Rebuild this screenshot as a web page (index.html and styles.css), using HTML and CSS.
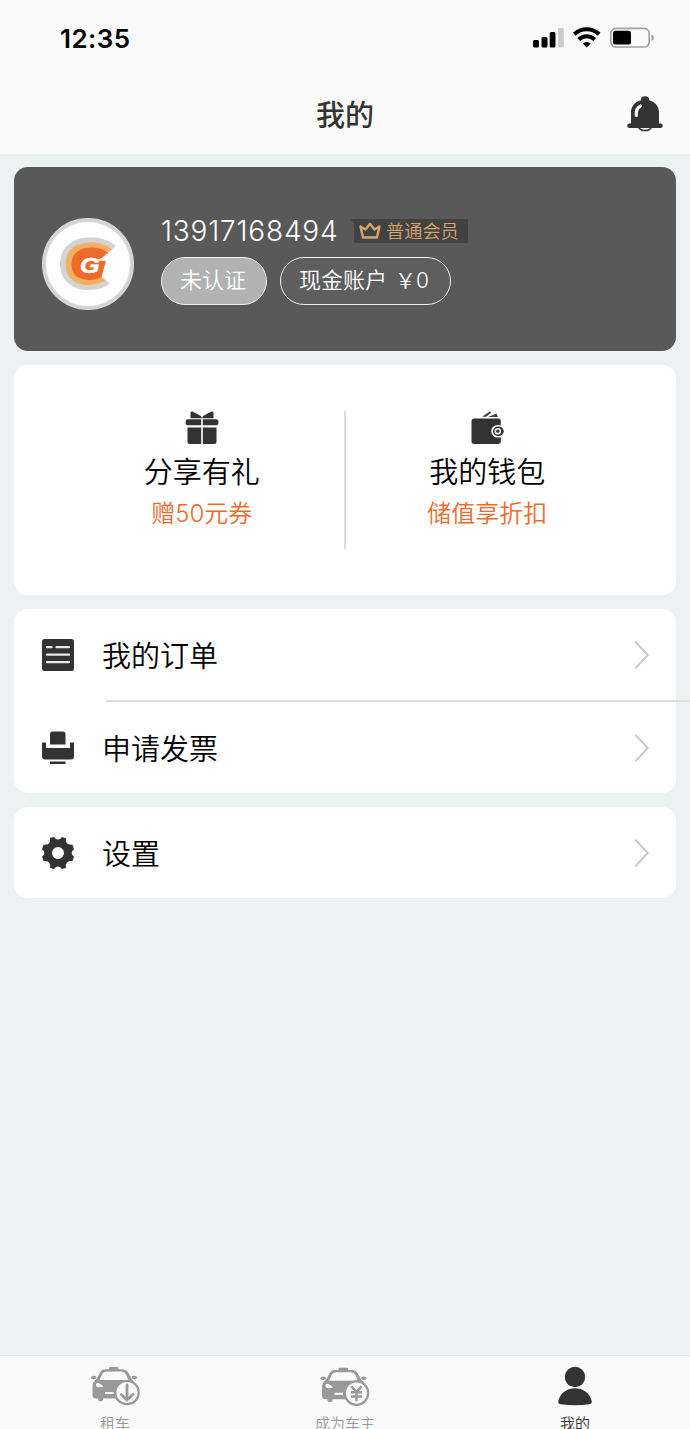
FILE: index.html
```html
<!DOCTYPE html>
<html lang="zh-CN">
<head>
<meta charset="utf-8">
<title>我的</title>
<link rel="stylesheet" href="styles.css">
</head>
<body>
<div class="screen">
  <header class="header">
    <div class="status">
      <span class="clock">12:35</span>
      <svg class="status-icons" width="124" height="24" viewBox="0 0 124 24">
        <rect x="3" y="14" width="6" height="7.500" rx="1.500"/>
        <rect x="11.500" y="11" width="6" height="10.500" rx="1.500"/>
        <rect x="19.700" y="6" width="5.800" height="15.500" rx="1.500"/>
        <rect x="28" y="2" width="5.800" height="19.500" rx="1.500" fill="#ccc"/>
        <g fill="none" stroke="#000" stroke-width="4">
          <path d="M44.300 8.200a18 18 0 0 1 24.800 0"/>
          <path d="M48.700 13.500a11.500 11.500 0 0 1 16 0"/>
        </g>
        <path d="M56.700 21.500l-4-4a6 6 0 0 1 8 0z"/>
        <rect x="80.800" y="2.300" width="38.400" height="18.700" rx="5" fill="none" stroke="#a0a0a0" stroke-width="1.700"/>
        <rect x="83" y="4.800" width="18" height="13.700" rx="2.600"/>
        <path d="M121.500 8.500q2.300 1 2.300 3.300t-2.300 3.300z" fill="#999"/>
      </svg>
    </div>
    <div class="titlebar">
      <h1 class="title">我的</h1>
      <svg class="bell" width="36" height="36" viewBox="0 0 36 36">
        <path d="M11.600 31c1.400 4.800 11.400 4.800 12.800 0" fill="#fff" stroke="#333" stroke-width="1.500"/>
        <path d="M14 3Q14 .3 18 .3T22 3v1.200C28.500 5.800 32 10.500 32 16.500V27.500H33.500a2.200 2.200 0 0 1 0 4.500H2.500a2.200 2.200 0 0 1 0-4.500H4V16.500C4 10.500 7.500 5.800 14 4.200z" fill="#333"/>
        <path d="M9.300 19.500c-.4-5.500.8-8 4.200-9.500" fill="none" stroke="#fafafa" stroke-width="3.200" stroke-linecap="round"/>
      </svg>
    </div>
  </header>

  <main class="content">
    <section class="profile">
      <div class="avatar">
        <svg width="84" height="84" viewBox="0 0 84 84">
          <path d="M70 24C62 17 53 15.500 43 15.500C26 15.500 14 26 14 42S26 68 42 68C51 68 58 66 64.500 61.500L55 55L57 35z" fill="#d3d3d5"/>
          <path d="M66 27.500C60 22 52 20.500 44 20.500C29 20.500 19.500 29 19.500 42S29 63 42 63Q52 63 60 58.200L55 55L57 34z" fill="#f6ae63"/>
          <path d="M62 31C57 26.500 51 25.500 45 25.500C33 25.500 25.500 32 25.500 42.500S33 58 43 58Q50 58 55.500 55L60 38.500H53.500z" fill="#ee6a2b"/>
          <path d="M50 38L56 36L61 31.500L64 34L60 38.800H52z" fill="#fff"/>
          <text class="logo-letter" x="34" y="51" textLength="19.500" lengthAdjust="spacingAndGlyphs">G</text>
        </svg>
      </div>
      <div class="account">
        <div class="account-row">
          <span class="phone">13917168494</span>
          <span class="level">
            <svg width="22" height="18" viewBox="0 0 22 18"><path d="M1.500 4.500L6.500 7.500L11 1.800L15.500 7.500L20.500 4.500L18 15.500H4z" fill="none" stroke="#d6a56d" stroke-width="2.400" stroke-linejoin="round"/></svg>
            <span class="level-name">普通会员</span>
          </span>
        </div>
        <div class="pills">
          <span class="pill pill-solid">未认证</span>
          <span class="pill pill-cash"><span>现金账户</span><span class="amount">￥0</span></span>
        </div>
      </div>
    </section>

    <section class="shortcuts">
      <div class="shortcut">
        <svg width="34" height="34" viewBox="0 0 34 34" fill="#333">
          <path d="M5.500 2q0-2 2-1.500L16 5l1 2.200H5.500zM28.500 2q0-2-2-1.500L18 5l-1 2.200h11.500z"/>
          <path d="M3 8.300h13.200v6H2.600q-2 0-2-2v-2q0-2 2.400-2zM17.800 8.300H31q2.400 0 2.400 2v2q0 2-2 2H17.800z"/>
          <path d="M2.500 16.500h13.700V33H4.500q-2 0-2-2zM17.800 16.500h13.700V31q0 2-2 2H17.800z"/>
        </svg>
        <span class="shortcut-name">分享有礼</span>
        <span class="shortcut-note">赠50元券</span>
      </div>
      <div class="shortcut">
        <svg width="34" height="34" viewBox="0 0 34 34">
          <path d="M12 5.800L20 .3l1.200 1.400-5 4zM18 6L26.500 2.500l1.500 3.500z" fill="#444"/>
          <rect x="1.500" y="7.500" width="29.300" height="25.500" rx="2.700" fill="#333"/>
          <rect x="21.300" y="14" width="13.500" height="12.600" rx="6.300" fill="#fff"/>
          <rect x="23" y="15.500" width="10.700" height="9.500" rx="4.700" fill="#333"/>
          <circle cx="27.800" cy="20.200" r="2.500" fill="#333" stroke="#fff" stroke-width="1.500"/>
        </svg>
        <span class="shortcut-name">我的钱包</span>
        <span class="shortcut-note">储值享折扣</span>
      </div>
    </section>

    <section class="menu">
      <div class="row">
        <svg width="32" height="32" viewBox="0 0 32 32"><rect width="32" height="32" rx="2.500" fill="#333"/><path d="M5 8.200h4.500M14.500 8.200H27M5 15.700h22M5 23.200h22" stroke="#e8e8e8" stroke-width="2.300" stroke-linecap="round"/></svg>
        <span class="row-name">我的订单</span>
        <svg class="chevron" width="16" height="30" viewBox="0 0 16 30"><path d="M1.300 1.600L13.800 15L1.300 28.400"/></svg>
      </div>
      <div class="divider"></div>
      <div class="row">
        <svg width="32" height="34" viewBox="0 0 32 34" fill="#333"><path d="M8 13.500V3q0-2.500 2.500-2.500h10.500q2.500 0 2.500 2.500v10.500z"/><path d="M0 11.500h4v5.500h24v-5.500h4V25.500q0 3-3 3H3q-3 0-3-3z"/><path d="M8 30.500h15.500v2.500H8z"/></svg>
        <span class="row-name">申请发票</span>
        <svg class="chevron" width="16" height="30" viewBox="0 0 16 30"><path d="M1.300 1.600L13.800 15L1.300 28.400"/></svg>
      </div>
    </section>

    <section class="menu">
      <div class="row">
        <svg width="32" height="32" viewBox="0 0 32 32"><path fill="#333" fill-rule="evenodd" d="M8 .8L12.200 0Q13.400 2.500 16 2.500T19.800 0L24 1.200Q23.200 4.500 24.800 6.200T30.500 7.800L32 12.200Q29.700 13.800 29.700 16T32 19.800L30.500 24Q26.700 23.700 25 25.400T24 31L19.800 32Q18.600 29.500 16 29.500T12.200 32L8 31Q8.700 27 7 25.400T1.500 24L0 19.800Q2.300 18.200 2.300 16T0 12.200L1.500 7.800Q5.300 8 7 6.400T8 .8zM16 10a6 6 0 1 0 0 12a6 6 0 1 0 0-12z"/></svg>
        <span class="row-name">设置</span>
        <svg class="chevron" width="16" height="30" viewBox="0 0 16 30"><path d="M1.300 1.600L13.800 15L1.300 28.400"/></svg>
      </div>
    </section>
  </main>

  <nav class="tabs">
    <div class="tab">
      <svg width="50" height="40" viewBox="0 0 50 40">
        <g fill="#999"><path fill-rule="evenodd" d="M19 2.200Q19 1 20.500 1h6.500q1.500 0 1.500 1.200v1H32q4.500.2 6.200 3.300L42 13.500Q45.500 16 45.500 21V29q0 3.500-3 3.500H13v1q0 2-2.500 2T8 33.500v-1H6q-3.500 0-3.500-3.500V20q0-4.500 4-7L10 6.500Q11.500 3.300 15.500 3.200H19zM16.500 5.500q-3 0-4.200 2.500L9.500 14H38.500L35.700 8Q34.500 5.500 31.500 5.500z"/><ellipse cx="3.700" cy="11.500" rx="2.800" ry="1.700"/><ellipse cx="44.300" cy="11.500" rx="2.800" ry="1.700"/></g>
        <path d="M6 18.500q0-2.300 3-1.300t4.500 3.500q-7.500 2-7.500-2.200zM15 26h8.500v2H15z" fill="#fafafa"/>
        <circle cx="37" cy="26.500" r="11.700" fill="#fafafa" stroke="#999" stroke-width="2.200"/>
        <path d="M37 19v14M31.200 28.500l5.800 5.500L42.800 28.500" fill="none" stroke="#999" stroke-width="2.800" stroke-linecap="round" stroke-linejoin="round"/>
      </svg>
      <span class="tab-name">租车</span>
    </div>
    <div class="tab">
      <svg width="50" height="40" viewBox="0 0 50 40">
        <g transform="translate(-.5 .8)"><g fill="#999"><path fill-rule="evenodd" d="M19 2.200Q19 1 20.500 1h6.500q1.500 0 1.500 1.200v1H32q4.500.2 6.200 3.300L42 13.500Q45.500 16 45.500 21V29q0 3.500-3 3.500H13v1q0 2-2.500 2T8 33.500v-1H6q-3.500 0-3.500-3.500V20q0-4.500 4-7L10 6.500Q11.500 3.300 15.500 3.200H19zM16.500 5.500q-3 0-4.200 2.500L9.500 14H38.500L35.700 8Q34.500 5.500 31.500 5.500z"/><ellipse cx="3.700" cy="11.500" rx="2.800" ry="1.700"/><ellipse cx="44.300" cy="11.500" rx="2.800" ry="1.700"/></g>
        <path d="M6 18.500q0-2.300 3-1.300t4.500 3.500q-7.500 2-7.500-2.200zM15 26h8.500v2H15z" fill="#fafafa"/>
        <circle cx="37" cy="26.300" r="11.700" fill="#fafafa" stroke="#999" stroke-width="2.200"/>
        <path d="M31.800 19.500l5.200 5.500l5.200-5.500M37 25v9.500M31.500 25.500h11M31.500 29.700h11" fill="none" stroke="#999" stroke-width="2.500"/></g>
      </svg>
      <span class="tab-name">成为车主</span>
    </div>
    <div class="tab tab-active">
      <svg width="50" height="40" viewBox="0 0 50 40" fill="#333"><circle cx="25" cy="11" r="10.200"/><path d="M8.200 35.500C10 27 17 22.300 25 22.300S40 27 41.800 35.500Q42 38 39 38.300Q25 40 11 38.300Q8 38 8.200 35.500z"/></svg>
      <span class="tab-name">我的</span>
    </div>
  </nav>
</div>
</body>
</html>
```
FILE: styles.css
```css
* { box-sizing: border-box; }
body { margin: 0; font-family: Inter, "Noto Sans CJK SC", sans-serif; font-weight: 350; color: #000; }
svg { display: block; flex: none; }
.screen { width: 690px; height: 1429px; overflow: hidden; display: flex; flex-direction: column; background: #edf1f2; }
.header { height: 154px; flex: none; background: #fafafa; }
.status { height: 76px; display: flex; justify-content: space-between; align-items: center; padding: 0 36px 0 60px; }
.clock { font-size: 26px; font-weight: 600; letter-spacing: .4px; }
.titlebar { height: 78px; display: grid; grid-template-columns: 1fr auto 1fr; align-items: center; padding: 0 27px; }
.title { grid-column: 2; margin: 0; padding-top: 2px; font-size: 29px; line-height: 40px; font-weight: 500; color: #333; }
.bell { justify-self: end; margin-bottom: 3px; }
.content { flex: 1; display: flex; flex-direction: column; gap: 14px; padding: 13px 14px 0; }
.profile { height: 184px; flex: none; border-radius: 14px; background: #595959; display: flex; padding: 0 28px; }
.avatar { width: 92px; height: 92px; margin-top: 51px; border: 4px solid #d5d5d5; border-radius: 50%; background: #fff; }
.logo-letter { font: italic 900 22px "Liberation Sans", sans-serif; fill: #fff; stroke: #fff; stroke-width: .6px; }
.account { padding: 46px 0 0 27px; }
.account-row { height: 36px; display: flex; align-items: center; gap: 11px; }
.phone { width: 178px; font-size: 28px; font-weight: 350; letter-spacing: .8px; color: #fff; white-space: nowrap; }
.level { width: 118px; height: 24px; display: flex; align-items: center; gap: 5px; padding-left: 9px; background: #424242; clip-path: polygon(0 0, 100% 0, 100% 100%, 4px 100%, 4px 4px); }
.level-name { font-size: 18.200px; line-height: 24px; color: #d6a56d; }
.pills { display: flex; gap: 13px; margin-top: 8px; }
.pill { height: 48px; border: 1px solid #eee; border-radius: 24px; padding: 0 18px; font-size: 22px; line-height: 45px; color: #fff; white-space: nowrap; background: #5e5e5e; }
.pill-solid { width: 106px; background: #b2b2b2; }
.pill-cash { width: 171px; display: flex; gap: 8px; }
.amount { font-size: 21px; }
.shortcuts { height: 230px; flex: none; border-radius: 14px; background: #fff; display: flex; padding: 46px 47px 46px 46px; }
.shortcut { flex: 1; display: flex; flex-direction: column; align-items: center; }
.shortcut:first-child { border-right: 2px solid #ddd; }
.shortcut-name { font-size: 29px; line-height: 42px; margin-top: 7px; }
.shortcut-note { font-size: 24px; line-height: 36px; margin-top: 2px; color: #ee6a2b; }
.menu { flex: none; border-radius: 14px; background: #fff; }
.row { height: 91px; display: flex; align-items: center; padding: 0 26px 0 28px; }
.row-name { flex: 1; padding: 4px 0 0 28px; font-size: 29px; line-height: 42px; }
.chevron { fill: none; stroke: #c8c8c8; stroke-width: 2; }
.divider { height: 2px; margin: 0 -14px 0 92px; background: #ddd; }
.tabs { height: 74px; flex: none; display: grid; grid-template-columns: repeat(3, 1fr); border-top: 1px solid #e7eaeb; background: #fafafa; }
.tab { display: flex; flex-direction: column; align-items: center; padding-top: 10px; color: #999; }
.tab-active { color: #333; }
.tab-name { font-size: 15px; line-height: 22px; margin-top: 7px; }
```
